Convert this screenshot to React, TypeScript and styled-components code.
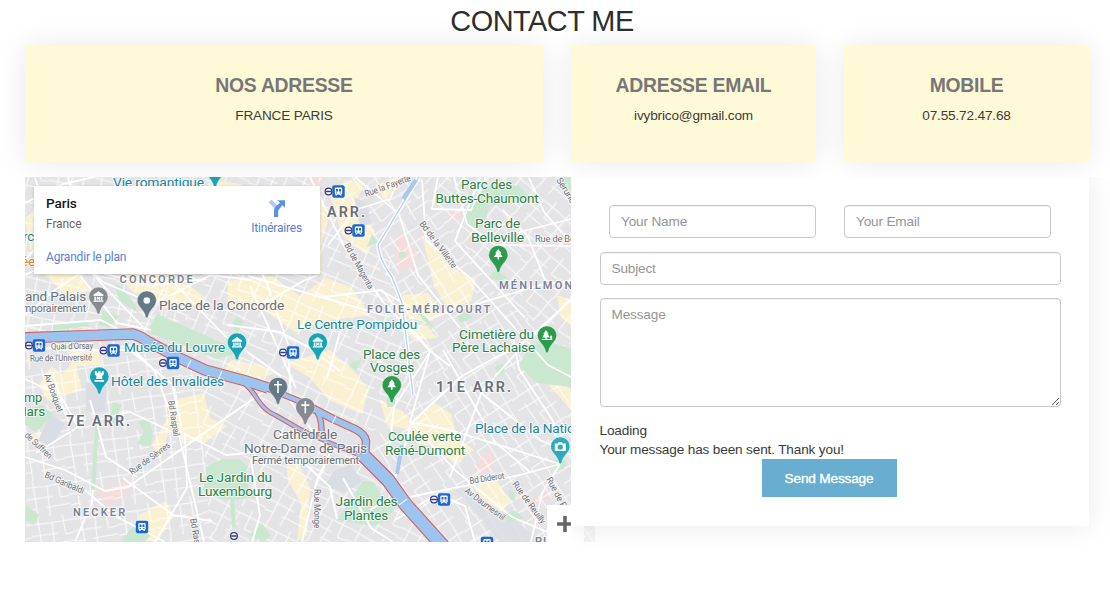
import React from 'react';
import styled, { createGlobalStyle } from 'styled-components';

const Global = createGlobalStyle`
  * { box-sizing: border-box; }
  body { margin: 0; background: #fff; overflow: hidden; color: #333;
    font: 13.6px/19px "Liberation Sans", Arial, sans-serif; letter-spacing: -0.16px; }
`;
const Page = styled.main`
  width: 1110px; height: 600px; padding: 6px 21px 0 25px; overflow: hidden;
`;
const Title = styled.h2`
  margin: 0 30px 9px 0; text-align: center; font-size: 28.9px; line-height: 31px; font-weight: 400; color: #2e2e2e;
  letter-spacing: -0.5px; position: relative; z-index: 1;
`;
const Cards = styled.section`
  display: grid; grid-template-columns: 518px 245px 245px; gap: 28px;
`;
const Card = styled.article`
  height: 116px; padding-top: 28px; text-align: center; background: #fefad8;
  box-shadow: 0 0 28px rgba(0, 0, 0, 0.09);
`;
const CardTitle = styled.h3`
  margin: 0 0 9px; font-size: 19.4px; line-height: 23px; font-weight: 700; color: #777; letter-spacing: -0.28px;
`;
const CardText = styled.p`margin: 0; color: #3c3c38;`;
const Bottom = styled.section`display: flex; align-items: flex-start; margin-top: 15px;`;
const MapPane = styled.div`
  position: relative; width: 570px; height: 365px; flex: none; overflow: hidden;
  svg { display: block; }
`;
const InfoCard = styled.div`
  position: absolute; left: 9px; top: 9px; width: 286px; height: 88px; padding: 9px 18px 0 12px;
  display: flex; justify-content: space-between; background: #fff; box-shadow: 0 1px 3px rgba(0, 0, 0, 0.22);
  font-family: Roboto, sans-serif; font-size: 12px; line-height: 16px; color: #666; letter-spacing: -0.1px;
`;
const Place = styled.div`font-size: 13.6px; font-weight: 500; color: #161616; margin-bottom: 5px;`;
const MapLink = styled.div<{ $gap?: number }>`
  color: #5a80cf; margin-top: ${p => p.$gap ?? 0}px; letter-spacing: -0.19px;
`;
const Directions = styled.div`
  padding-top: 4px; display: flex; flex-direction: column; align-items: center;
`;
const ZoomIn = styled.div`
  position: absolute; left: 522px; top: 328px; width: 37px; height: 37px; background: #fff;
  padding: 10px 0 0 9px;
`;
const Form = styled.form`
  position: relative; width: 518px; height: 349px; margin-left: -24px; padding: 28px 28.5px 0; background: #fff;
  box-shadow: 0 0 28px rgba(0, 0, 0, 0.09); clip-path: inset(0 -40px -40px 0);
`;
const Pair = styled.div`display: grid; grid-template-columns: 1fr 1fr; gap: 28px; padding: 0 9.5px; margin-bottom: 14px;`;
const field = `
  display: block; width: 100%; border: 1px solid #c8c8c8; border-radius: 4px; background: #fff; outline: none;
  font: 13.6px/19px "Liberation Sans", Arial, sans-serif; letter-spacing: -0.16px; color: #555;
  box-shadow: inset 0 1px 1px rgba(0,0,0,.06);
  &::placeholder { color: #959595; opacity: 1; }
`;
const Input = styled.input`${field} height: 33px; padding: 5px 11px 6px;`;
const Message = styled.textarea`${field} height: 109px; padding: 6px 11px; margin: 13px 0 14px; resize: vertical;`;
const Status = styled.div`color: #3a3a3a; letter-spacing: -0.15px;`;
const Send = styled.button`
  display: block; width: 135px; height: 38px; margin: 0 auto; padding: 0; border: 0; background: #67aed1; color: #fff;
  position: relative; left: -1px;
  font: 13.6px "Liberation Sans", Arial, sans-serif; letter-spacing: -0.16px; -webkit-text-stroke: 0.35px #fff;
`;

const colors = { teal: '#16879a', green: '#2a8246', grey: '#686e76', area: '#7b8296', street: '#6d6e73' };

type LabelProps = {
  x: number; y: number; w: number; s?: number; c?: string; bold?: boolean; r?: number;
  children: string;
};
const Label = ({ x, y, w, s = 13.4, c = colors.street, bold, r, children }: LabelProps) => (
  <text x={x} y={y} textLength={w} lengthAdjust={bold ? 'spacing' : 'spacingAndGlyphs'} fontSize={s} fill={c} fontWeight={bold ? 600 : 400}
    transform={r ? `rotate(${r} ${x} ${y})` : undefined}
    stroke="#fff" strokeOpacity={0.7} strokeWidth={2} strokeLinejoin="round" paintOrder="stroke">{children}</text>
);

const glyphs: Record<string, React.ReactNode> = {
  museum: <path d="M-5-2 0-5.5 5-2v1.2H-5zM-4 0h1.6v3.5H-4zM2.4 0H4v3.5H2.4zM-5 3.8H5V5H-5zM-1.6 3.5V0h.9L0 1.3.7 0h.9v3.5H.8V1.8L0 3-.8 1.8v1.7z" />,
  dot: <circle r="3.3" />,
  tree: <path d="M0-6 3.2-1.8H1.9L4.3 2H.8v2.5H-.8V2h-3.5l2.4-3.8h-1.3z" />,
  cemetery: <path d="M-1-5.5 1.6-1.5H.7L2.8 2H-.3v1.4h5.6v1.2H-5.3V3.4h3.5V2h-3L-2.7-1.5h-.9zM3 3.2V1.2a1.1 1.1 0 0 1 2.2 0v2z" />,
  castle: <path d="M-4.5-5.5h2v1.6h1.3v-1.6h2.4v1.6h1.3v-1.6h2v3.4L2.8-.8 3.2 2.4H-3.2L-2.8-.8-4.5-2.1zM-4.8 3.2h9.6V5h-9.6z" />,
  cross: <path d="M-.8-6H.8v3H4v1.6H.8V6H-.8v-7.4H-4V-3h3.2z" />,
  camera: <path fillRule="evenodd" d="M-5.5-3h3l1.1-1.6h2.8L2.5-3h3v7.4h-11zM0-2.1A2.6 2.6 0 1 0 0 3.1 2.6 2.6 0 0 0 0-2.1z" />,
};
const Pin = ({ x, y, c, g }: { x: number; y: number; c: string; g: string }) => (
  <g transform={`translate(${x} ${y})`}>
    <path d="M-9.6 0a9.6 9.6 0 1 1 19.2 0c0 6-6.8 8.5-8.3 16.2-.3 1.5-2.3 1.5-2.6 0C-2.8 8.5-9.6 6-9.6 0z" fill={c} stroke="#fff" strokeOpacity="0.5" strokeWidth="0.7" />
    <g fill="#fff">{glyphs[g]}</g>
  </g>
);
const Ring = ({ x, y }: { x: number; y: number }) => (
  <g transform={`translate(${x} ${y})`}>
    <circle r="3.4" fill="#fff" stroke="#34377d" strokeWidth="1.2" />
    <path d="M-2.7 0h5.4" stroke="#34377d" strokeWidth="1.5" />
  </g>
);
const Station = ({ x, y, ring = true }: { x: number; y: number; ring?: boolean }) => (
  <g>
    {ring && <Ring x={x - 10} y={y} />}
    <g transform={`translate(${x} ${y})`}>
      <rect x="-6.2" y="-6.2" width="12.4" height="12.4" rx="2" fill="#1b66d2" />
      <path fillRule="evenodd" fill="#fff" d="M-2.5-4h5q1.2 0 1.2 1.2v4.6Q3.7 3 2.5 3L3.3 4H1.9L1 3h-2l-.9 1h-1.4l.8-1q-1.2 0-1.2-1.2v-4.6Q-3.7-4-2.5-4zM-2.5-2.6V0h2v-2.6zM.5-2.6V0h2v-2.6zM-2.4 1v1h1.2V1zM1.2 1v1h1.2V1z" />
    </g>
  </g>
);

const grids = [
  { id: 'g1', a: 12, pts: '24,177 170,177 150,260 190,320 135,330 24,332' },
  { id: 'g2', a: 24, pts: '170,177 330,177 390,260 420,400 360,440 270,385 190,355 135,330' },
  { id: 'g3', a: -32, pts: '330,177 420,177 500,300 420,400 390,260' },
  { id: 'g4', a: 42, pts: '420,177 571,177 595,360 500,300' },
  { id: 'g5', a: 58, pts: '500,300 595,360 595,542 450,542 360,450 420,400' },
  { id: 'g6', a: -8, pts: '24,340 135,335 200,370 210,542 24,542' },
  { id: 'g7', a: 28, pts: '200,370 260,395 350,450 445,542 210,542' },
];
const yellow = [
  '25,218 48,200 64,236 30,250', '44,274 75,272 94,290 67,296', '118,276 150,272 189,285 206,298 185,311 132,291',
  '75,360 62,375 52,366 38,385 48,401 82,390', '66,350 98,348 102,365 76,366', '195,200 215,180 240,184 254,194 318,185 328,222 321,244 321,273',
  '228,281 272,276 300,296 326,278 351,287 370,315 332,320 296,333 261,308 228,310', '330,196 345,180 365,183 352,210 375,230 366,255 342,235',
  '375,185 398,177 400,187 384,200', '422,235 438,252 455,269 476,280 471,301 450,312 434,286',
  '403,295 428,293 443,314 427,323 397,314', '400,322 427,326 437,338 414,340', '286,363 330,350 354,371 369,390 362,414 329,400 310,378',
  '379,399 402,411 414,421 432,401 451,414 458,438 474,450 455,464 435,447 417,443 406,429 387,425',
  '178,399 204,393 210,418 227,426 205,443 180,439 170,427 160,461 152,445', '286,461 299,464 310,487 307,535 297,541 301,504 288,480',
  '139,515 166,501 174,516 158,541 143,541', '474,488 494,477 510,500 498,518 484,502', '557,295 571,300 571,325 561,318',
  '545,365 571,390 571,410 547,383', '231,360 260,365 273,374 260,379 224,371', '26,435 39,449 55,442 49,430',
];
const parks = [
  '157,314 227,345 234,354 218,359 147,332', '114,285 120,301 137,312 135,304 120,286', '103,311 120,316 109,327 98,325', '53,324 88,320 89,326 53,330',
  '24,418 38,403 53,414 36,432 24,424', '113,402 122,405 114,423 109,419', '138,422 149,419 153,434 151,446 137,444 144,431',
  '207,466 222,459 238,459 248,466 244,478 255,498 225,500 203,490', '363,481 373,482 384,499 398,505 386,519 375,526 337,520',
  '530,346 545,340 571,349 571,387 537,383 519,366', '463,211 480,193 492,184 519,186 531,198 490,206 481,229 468,227',
  '558,177 571,177 571,196 561,187', '488,278 495,270 508,278 500,281', '236,317 244,321 238,333 232,327', '348,364 362,359 356,371',
  '367,247 372,234 378,242', '461,323 457,317 465,312 473,317', '505,513 516,511 524,518 508,522', '120,543 137,521 151,535 145,542',
  '249,535 262,523 271,536 263,542', '412,305 428,319 437,331 424,321', '495,367 503,363 505,372 498,377',
  '26,505 39,515 34,525 25,519', '185,193 195,183 198,195', '508,490 514,492 515,502 510,498',
];
const roads = [
  'M25 275 69 253 103 282 145 300', 'M25 315 55 290 79 274', 'M25 326 101 320 161 352', 'M79 274 117 323 151 330', 'M68 177 98 280 143 327',
  'M142 177 174 283 225 336 281 376', 'M217 196 266 281 288 344 291 402 328 452', 'M310 177 343 244 383 302 430 351 450 366', 'M422 180 426 240 470 278 548 365 571 377',
  'M323 297 382 290 430 351 410 422', 'M380 290 430 318 540 285 571 281', 'M430 352 394 407 389 453', 'M410 422 450 430 560 464', 'M410 424 462 376 527 340 571 300',
  'M411 424 389 498 370 510', 'M404 498 520 475 560 464', 'M410 421 456 471 512 517 571 542', 'M560 464 542 493 531 542', 'M560 464 553 421 519 369 512 331',
  'M25 457 65 470 105 491 128 487 214 426 265 391', 'M85 490 115 516 165 542', 'M93 490 92 502 75 542', 'M137 477 106 457 97 424 90 400',
  'M93 421 130 412 179 435 204 542', 'M25 346 66 350 134 350 154 370 177 430', 'M25 379 61 396 78 427 36 453', 'M53 373 65 414 86 420',
  'M123 478 173 515 212 521', 'M126 347 172 384 182 428', 'M177 430 226 455 272 451 304 463 330 487 337 519', 'M155 542 187 488 185 435',
  'M251 460 260 515 252 542', 'M331 451 317 480 302 542', 'M343 478 371 528 393 542', 'M395 520 437 494 465 506 475 542',
  'M229 310 269 301 303 281 318 275', 'M228 325 280 332 310 348 340 371', 'M248 276 390 317', 'M250 286 296 388', 'M343 322 327 378', 'M355 177 399 214 418 275 460 328',
  'M454 177 467 224 495 245 571 246', 'M480 177 455 241 525 318', 'M503 210 528 237 548 288', 'M512 234 571 219', 'M529 178 544 212 571 243',
  'M438 177 432 209 471 210 486 177', 'M25 203 63 184 94 177', 'M35 178 52 230 25 260', 'M102 273 150 285 206 279', 'M151 305 211 275 251 280',
  'M400 177 390 199 355 210 328 245', 'M443 350 495 442 530 472', 'M480 392 540 440 571 455', 'M450 477 482 391 519 350',
];
const upperArm = 'M263 387 282 394 299 401 318 411';
const rightArm = 'M312 408 333 419 355 429Q365 434 366 441L365 456';
const lowerArm = 'M244 383Q252 390 258 400Q265 411 275 415L303 431 330 443 362 456';
const river = 'M20 338 79 336 133 334Q140 336 147 341L177 357 205 370 246 381 268 388';
const seine = 'M363 455 388 480 406 505 443 546';
const islandCut = 'M317 411Q323 421 321 438';

const ParisMap = () => (
  <svg width="570" height="365" viewBox="25 177 570 365" fontFamily="Roboto, sans-serif">
    <defs>
      {grids.map(g => (
        <pattern key={g.id} id={g.id} width="43" height="37" patternUnits="userSpaceOnUse" patternTransform={`rotate(${g.a})`}>
          <path d="M0 6 18 7 43 6M0 18H27M18 28 43 27M8 0 9 37M22 7 21 37M33 0 34 20M34 20 43 19M0 29 9 28" fill="none" stroke="#fff" strokeOpacity="0.85" strokeWidth="1.1" />
        </pattern>
      ))}
    </defs>
    <rect x="24" y="177" width="571" height="365" fill="#e4e4e6" />
    <g fill="#faf1d3">{yellow.map(p => <polygon key={p} points={p} />)}</g>
    <g fill="#f6dcdc">
      <polygon points="395,244 401,233 417,252 412,269 398,269" /><polygon points="480,456 494,452 494,473 477,472" />
      <polygon points="97,492 125,480 130,491 108,505" /><polygon points="296,416 306,413 311,424 297,421" />
      <polygon points="534,498 545,491 549,498 538,506" /><polygon points="307,177 325,177 314,188" /><polygon points="444,214 463,212 458,220" />
    </g>
    {grids.map(g => <polygon key={g.id} points={g.pts} fill={`url(#${g.id})`} />)}
    <g fill="#dadde3">
      <polygon points="50,414 65,424 51,447 38,441" /><polygon points="334,471 350,464 362,481 345,493 325,486" />
      <polygon points="354,197 367,204 371,224 360,226" /><polygon points="450,484 470,490 532,533 543,542 500,542 474,510" opacity="0.8" />
      <polygon points="86,383 107,386 105,412 86,412" />
    </g>
    <g fill="#c9e8cf">{parks.map(p => <polygon key={p} points={p} />)}<circle cx="560" cy="464" r="6" /></g>
    <path d="M97 425 93 490M232 498 234 527" stroke="#c9e8cf" strokeWidth="4" />
    <path d="M391 398V407" stroke="#c9e8cf" strokeWidth="8" />
    <circle cx="402" cy="255" r="3.5" fill="#c9e8cf" />
    <g fill="none" stroke="#fff" strokeWidth="1.8" strokeLinejoin="round">{roads.map(d => <path key={d} d={d} />)}</g>
    <path d="M419 177 378 245Q379 259 392 277L402 303 413 395" fill="none" stroke="#fff" strokeWidth="4" />
    <path d="M419 177 378 245Q379 259 392 277L402 303 413 395" fill="none" stroke="#bdd1ee" strokeWidth="1.4" />
    <path d="M416 180 403 199M402 445 397 474" fill="none" stroke="#a8c9ef" strokeWidth="4" />
    <g fill="none" strokeLinejoin="round">
      <g stroke="#d46266">
        <path d={river} strokeWidth="11.5" /><path d={upperArm} strokeWidth="6.5" /><path d={rightArm} strokeWidth="8.5" /><path d={lowerArm} strokeWidth="5" />
        <path d={islandCut} strokeWidth="6.5" /><path d={seine} strokeWidth="14.5" />
      </g>
      <g stroke="#9cc4ee">
        <path d={river} strokeWidth="9.3" /><path d={upperArm} strokeWidth="4.3" /><path d={rightArm} strokeWidth="6.3" /><path d={lowerArm} strokeWidth="2.8" />
        <path d={islandCut} strokeWidth="4.3" /><path d="M362 454 388 480 406 505 443 546" strokeWidth="12.3" />
      </g>
      <path d="M191 360 187 368M222 371 218 380M283 391 280 398M336 416 332 424M407 499 399 505" stroke="#fff" strokeOpacity="0.8" strokeWidth="1.1" />
    </g>

    <Label x={366} y={197} w={48} s={9} r={-20}>Rue la Fayette</Label>
    <Label x={344} y={245} w={51} s={9} r={61}>Bd de Magenta</Label>
    <Label x={419} y={224} w={56} s={9} r={53}>Bd de la Villette</Label>
    <Label x={535} y={242} w={64} s={9}>Rue de Belleville</Label>
    <Label x={556} y={180} w={31} s={9} r={58}>Sérurier</Label>
    <Label x={51} y={349.5} w={42} s={9} r={-1}>Quai d'Orsay</Label>
    <Label x={30} y={361.5} w={62} s={9} r={-1}>Rue de l'Université</Label>
    <Label x={44} y={375} w={40} s={9} r={70}>Av Bosquet</Label>
    <Label x={24} y={436} w={34} s={9} r={43}>de Suffren</Label>
    <Label x={44} y={477} w={42} s={9} r={24}>Bd Garibaldi</Label>
    <Label x={168} y={401} w={36} s={9} r={81}>Bd Raspail</Label>
    <Label x={132} y={475} w={48} s={9} r={-36}>Rue de Sèvres</Label>
    <Label x={190} y={519} w={38} s={9} r={80}>Bd Raspail</Label>
    <Label x={314} y={489} w={39} s={9} r={90}>Rue Monge</Label>
    <Label x={470} y={484} w={35} s={9} r={-9}>Bd Diderot</Label>
    <Label x={464} y={492} w={48} s={9} r={37}>Av Daumesnil</Label>
    <Label x={512} y={484} w={50} s={9} r={54}>Rue de Reuilly</Label>
    <Label x={546} y={479} w={54} s={9} r={62}>Rue de Picpus</Label>

    <Label x={113} y={186.5} w={91} c={colors.teal}>Vie romantique</Label>
    <Label x={23} y={241} w={11} c={colors.teal}>rc</Label>
    <Label x={21} y={266} w={14} c="#d58428">ée</Label>
    <Label x={327} y={217} w={38} s={14.4} c={colors.grey} bold>ARR.</Label>
    <Label x={119.5} y={282.5} w={73} s={11} c={colors.area} bold>CONCORDE</Label>
    <Label x={367} y={313} w={123} s={11} c={colors.area} bold>FOLIE-MÉRICOURT</Label>
    <Label x={499} y={288.5} w={82} s={11} c={colors.area} bold>MÉNILMONT</Label>
    <Label x={436} y={391.5} w={75} s={14.4} c={colors.grey} bold>11E ARR.</Label>
    <Label x={66} y={425.5} w={64} s={14.4} c={colors.grey} bold>7E ARR.</Label>
    <Label x={73} y={515.5} w={52} s={11} c={colors.area} bold>NECKER</Label>
    <Label x={535} y={545} w={43} s={11} c={colors.area} bold>PICPUS</Label>
    <Label x={25} y={300.5} w={61} c={colors.grey}>and Palais</Label>
    <Label x={22} y={311.5} w={64} s={10.5} c={colors.grey}>mporairement</Label>
    <Label x={159} y={310} w={125} c={colors.grey}>Place de la Concorde</Label>
    <Label x={124} y={352} w={101} c={colors.teal}>Musée du Louvre</Label>
    <Label x={297} y={329} w={120} c={colors.teal}>Le Centre Pompidou</Label>
    <Label x={111} y={386} w={113} c={colors.teal}>Hôtel des Invalides</Label>
    <Label x={475} y={432.5} w={107} c={colors.teal}>Place de la Nation</Label>
    <Label x={461} y={189} w={51} c={colors.green}>Parc des</Label>
    <Label x={435.5} y={202.5} w={103} c={colors.green}>Buttes-Chaumont</Label>
    <Label x={475} y={228} w={45} c={colors.green}>Parc de</Label>
    <Label x={471} y={241.5} w={53} c={colors.green}>Belleville</Label>
    <Label x={459} y={338.5} w={75} c={colors.green}>Cimetière du</Label>
    <Label x={452} y={352} w={83} c={colors.green}>Père Lachaise</Label>
    <Label x={363} y={358.5} w={57} c={colors.green}>Place des</Label>
    <Label x={370} y={372} w={44} c={colors.green}>Vosges</Label>
    <Label x={388} y={441} w={73} c={colors.green}>Coulée verte</Label>
    <Label x={385} y={454.5} w={80} c={colors.green}>René-Dumont</Label>
    <Label x={24} y={402} w={18} c={colors.green}>mp</Label>
    <Label x={15} y={415.5} w={30} c={colors.green}>Mars</Label>
    <Label x={199} y={482} w={73} c={colors.green}>Le Jardin du</Label>
    <Label x={198} y={495.5} w={74} c={colors.green}>Luxembourg</Label>
    <Label x={335.5} y={506} w={62} c={colors.green}>Jardin des</Label>
    <Label x={344} y={519.5} w={44} c={colors.green}>Plantes</Label>
    <Label x={273} y={439} w={64} c={colors.grey}>Cathédrale</Label>
    <Label x={244} y={452.5} w={123} c={colors.grey}>Notre-Dame de Paris</Label>
    <Label x={252} y={464} w={107} s={11} c={colors.grey}>Fermé temporairement</Label>

    <Station x={39} y={345.5} /><Station x={113.5} y={350.5} /><Station x={173} y={363} />
    <Station x={338.5} y={191.5} /><Station x={358.5} y={230.5} /><Station x={293} y={352.5} />
    <Station x={142} y={527} ring={false} /><Station x={444} y={499.5} /><Station x={487} y={543} ring={false} />
    <Ring x={234} y={536} />
    <Pin x={215} y={170} c="#17a5b5" g="dot" /><Pin x={98.4} y={296.7} c="#858b91" g="museum" />
    <Pin x={146.8} y={300.5} c="#647b87" g="dot" /><Pin x={237} y={342.5} c="#17a5b5" g="museum" />
    <Pin x={317.8} y={342.5} c="#17a5b5" g="museum" /><Pin x={99.3} y={376.7} c="#17a5b5" g="castle" />
    <Pin x={498.3} y={255} c="#2c9c4c" g="tree" /><Pin x={547} y={335.5} c="#2c9c4c" g="cemetery" />
    <Pin x={391.8} y={385.3} c="#2c9c4c" g="tree" /><Pin x={278} y={387} c="#647b87" g="cross" />
    <Pin x={305.3} y={407.3} c="#858b91" g="cross" /><Pin x={560.3} y={446.5} c="#2daabc" g="camera" />
    <rect x="584" y="526" width="11" height="16" fill="#fff" opacity="0.55" />
  </svg>
);

export default function App() {
  return (
    <>
      <Global />
      <Page>
        <Title>CONTACT ME</Title>
        <Cards>
          <Card><CardTitle>NOS ADRESSE</CardTitle><CardText>FRANCE PARIS</CardText></Card>
          <Card><CardTitle>ADRESSE EMAIL</CardTitle><CardText>ivybrico@gmail.com</CardText></Card>
          <Card><CardTitle>MOBILE</CardTitle><CardText>07.55.72.47.68</CardText></Card>
        </Cards>
        <Bottom>
          <MapPane>
            <ParisMap />
            <InfoCard>
              <div>
                <Place>Paris</Place>
                <div>France</div>
                <MapLink $gap={17}>Agrandir le plan</MapLink>
              </div>
              <Directions>
                <svg width="18" height="18" viewBox="0 0 18 18">
                  <path d="M.5 3.5 3.5.5 9.5 6.5 6.5 9.5z" fill="#b4caef" />
                  <path d="M6 18v-6.5Q6 9 8 7.3L12 3.7 9.5 1.2H17V8.7L14.5 6.2 11.3 9.9Q10.2 11 10.2 12.5V18z" fill="#5b92db" />
                </svg>
                <MapLink $gap={3}>Itinéraires</MapLink>
              </Directions>
            </InfoCard>
            <ZoomIn>
              <svg width="18" height="18" viewBox="0 0 18 18"><path d="M7.2 1h3.6v6.2H17v3.6h-6.2V17H7.2v-6.2H1V7.2h6.2z" fill="#666" /></svg>
            </ZoomIn>
          </MapPane>
          <Form>
            <Pair><Input placeholder="Your Name" /><Input placeholder="Your Email" /></Pair>
            <Input placeholder="Subject" />
            <Message placeholder="Message" />
            <Status>Loading</Status>
            <Status>Your message has been sent. Thank you!</Status>
            <Send type="button">Send Message</Send>
          </Form>
        </Bottom>
      </Page>
    </>
  );
}
